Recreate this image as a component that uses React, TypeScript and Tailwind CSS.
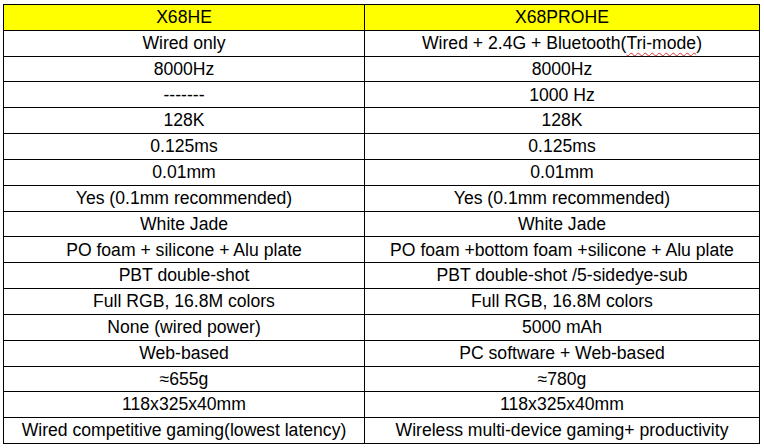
import React from "react";

const rows: [React.ReactNode, React.ReactNode][] = [
  ["Wired only", <>Wired + 2.4G + Bluetooth(<span className="underline decoration-wavy decoration-[#e03030] decoration-1 underline-offset-[3px]">Tri-mode</span>)</>],
  ["8000Hz", "8000Hz"],
  ["-------", "1000 Hz"],
  ["128K", "128K"],
  ["0.125ms", "0.125ms"],
  ["0.01mm", "0.01mm"],
  ["Yes (0.1mm recommended)", "Yes (0.1mm recommended)"],
  ["White Jade", "White Jade"],
  ["PO foam + silicone + Alu plate", "PO foam +bottom foam +silicone + Alu plate"],
  ["PBT double-shot", "PBT double-shot /5-sidedye-sub"],
  ["Full RGB, 16.8M colors", "Full RGB, 16.8M colors"],
  ["None (wired power)", "5000 mAh"],
  ["Web-based", "PC software + Web-based"],
  ["≈655g", "≈780g"],
  ["118x325x40mm", "118x325x40mm"],
  ["Wired competitive gaming(lowest latency)", "Wireless multi-device gaming+ productivity"],
];

export default function App() {
  return (
    <div className="w-[764px] h-[448px] bg-white pl-[3px] pt-[4px]" style={{ fontFamily: '"Liberation Sans", Arial, sans-serif' }}>
      <div className="grid grid-cols-[360px_394px] grid-rows-[repeat(17,1fr)] gap-px bg-black p-px w-[757px] h-[440px] text-[17.6px] text-black leading-none">
        <div className="bg-[#ffff00] flex items-center justify-center pt-px">X68HE</div>
        <div className="bg-[#ffff00] flex items-center justify-center pt-px">X68PROHE</div>
        {rows.map(([a, b], i) => (
          <React.Fragment key={i}>
            <div className="bg-white flex items-center justify-center pt-px whitespace-nowrap">{a}</div>
            <div className="bg-white flex items-center justify-center pt-px whitespace-nowrap">{b}</div>
          </React.Fragment>
        ))}
      </div>
    </div>
  );
}
